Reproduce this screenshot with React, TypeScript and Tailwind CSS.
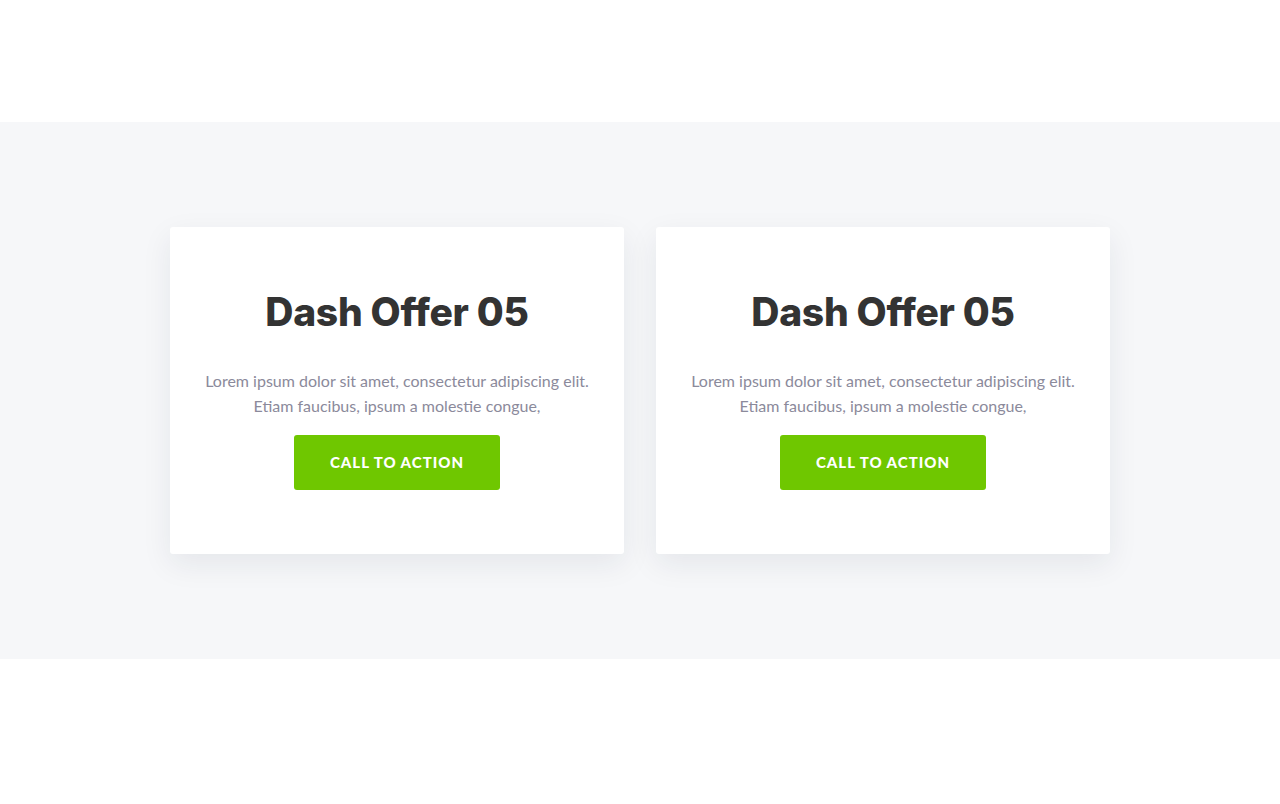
import React from "react";

const offers = [
  {
    title: "Dash Offer 05",
    text: "Lorem ipsum dolor sit amet, consectetur adipiscing elit. Etiam faucibus, ipsum a molestie congue,",
    cta: "Call to action",
  },
  {
    title: "Dash Offer 05",
    text: "Lorem ipsum dolor sit amet, consectetur adipiscing elit. Etiam faucibus, ipsum a molestie congue,",
    cta: "Call to action",
  },
];

const OfferCard = ({ offer }: { offer: (typeof offers)[number] }) => {
  return (
    <div className="bg-white rounded-[3px] shadow-[0_10px_30px_rgba(30,40,60,0.08)] pt-[62px] pb-[64px] px-8 flex flex-col items-center text-center">
      <h2 className="font-['Inter',sans-serif] font-extrabold text-[39px] leading-[45px] tracking-[-0.3px] text-[#333333]">
        {offer.title}
      </h2>
      <p className="mt-[34px] font-['Lato',sans-serif] text-[16px] leading-[25px] text-[#8b8a9b] max-w-[400px]">
        {offer.text}
      </p>
      <button className="mt-[17px] w-[206px] h-[55px] rounded-[3px] bg-[#6fc700] text-white font-['Lato',sans-serif] font-black text-[15px] tracking-[1px] uppercase">
        {offer.cta}
      </button>
    </div>
  );
};

export default function App() {
  return (
    <div className="w-full min-h-[804px] bg-white pt-[122px]">
      <section className="bg-[#f6f7f9] py-[105px]">
        <div className="w-[940px] mx-auto grid grid-cols-2 gap-8">
          {offers.map((offer, index) => (
            <OfferCard key={index} offer={offer} />
          ))}
        </div>
      </section>
    </div>
  );
}
